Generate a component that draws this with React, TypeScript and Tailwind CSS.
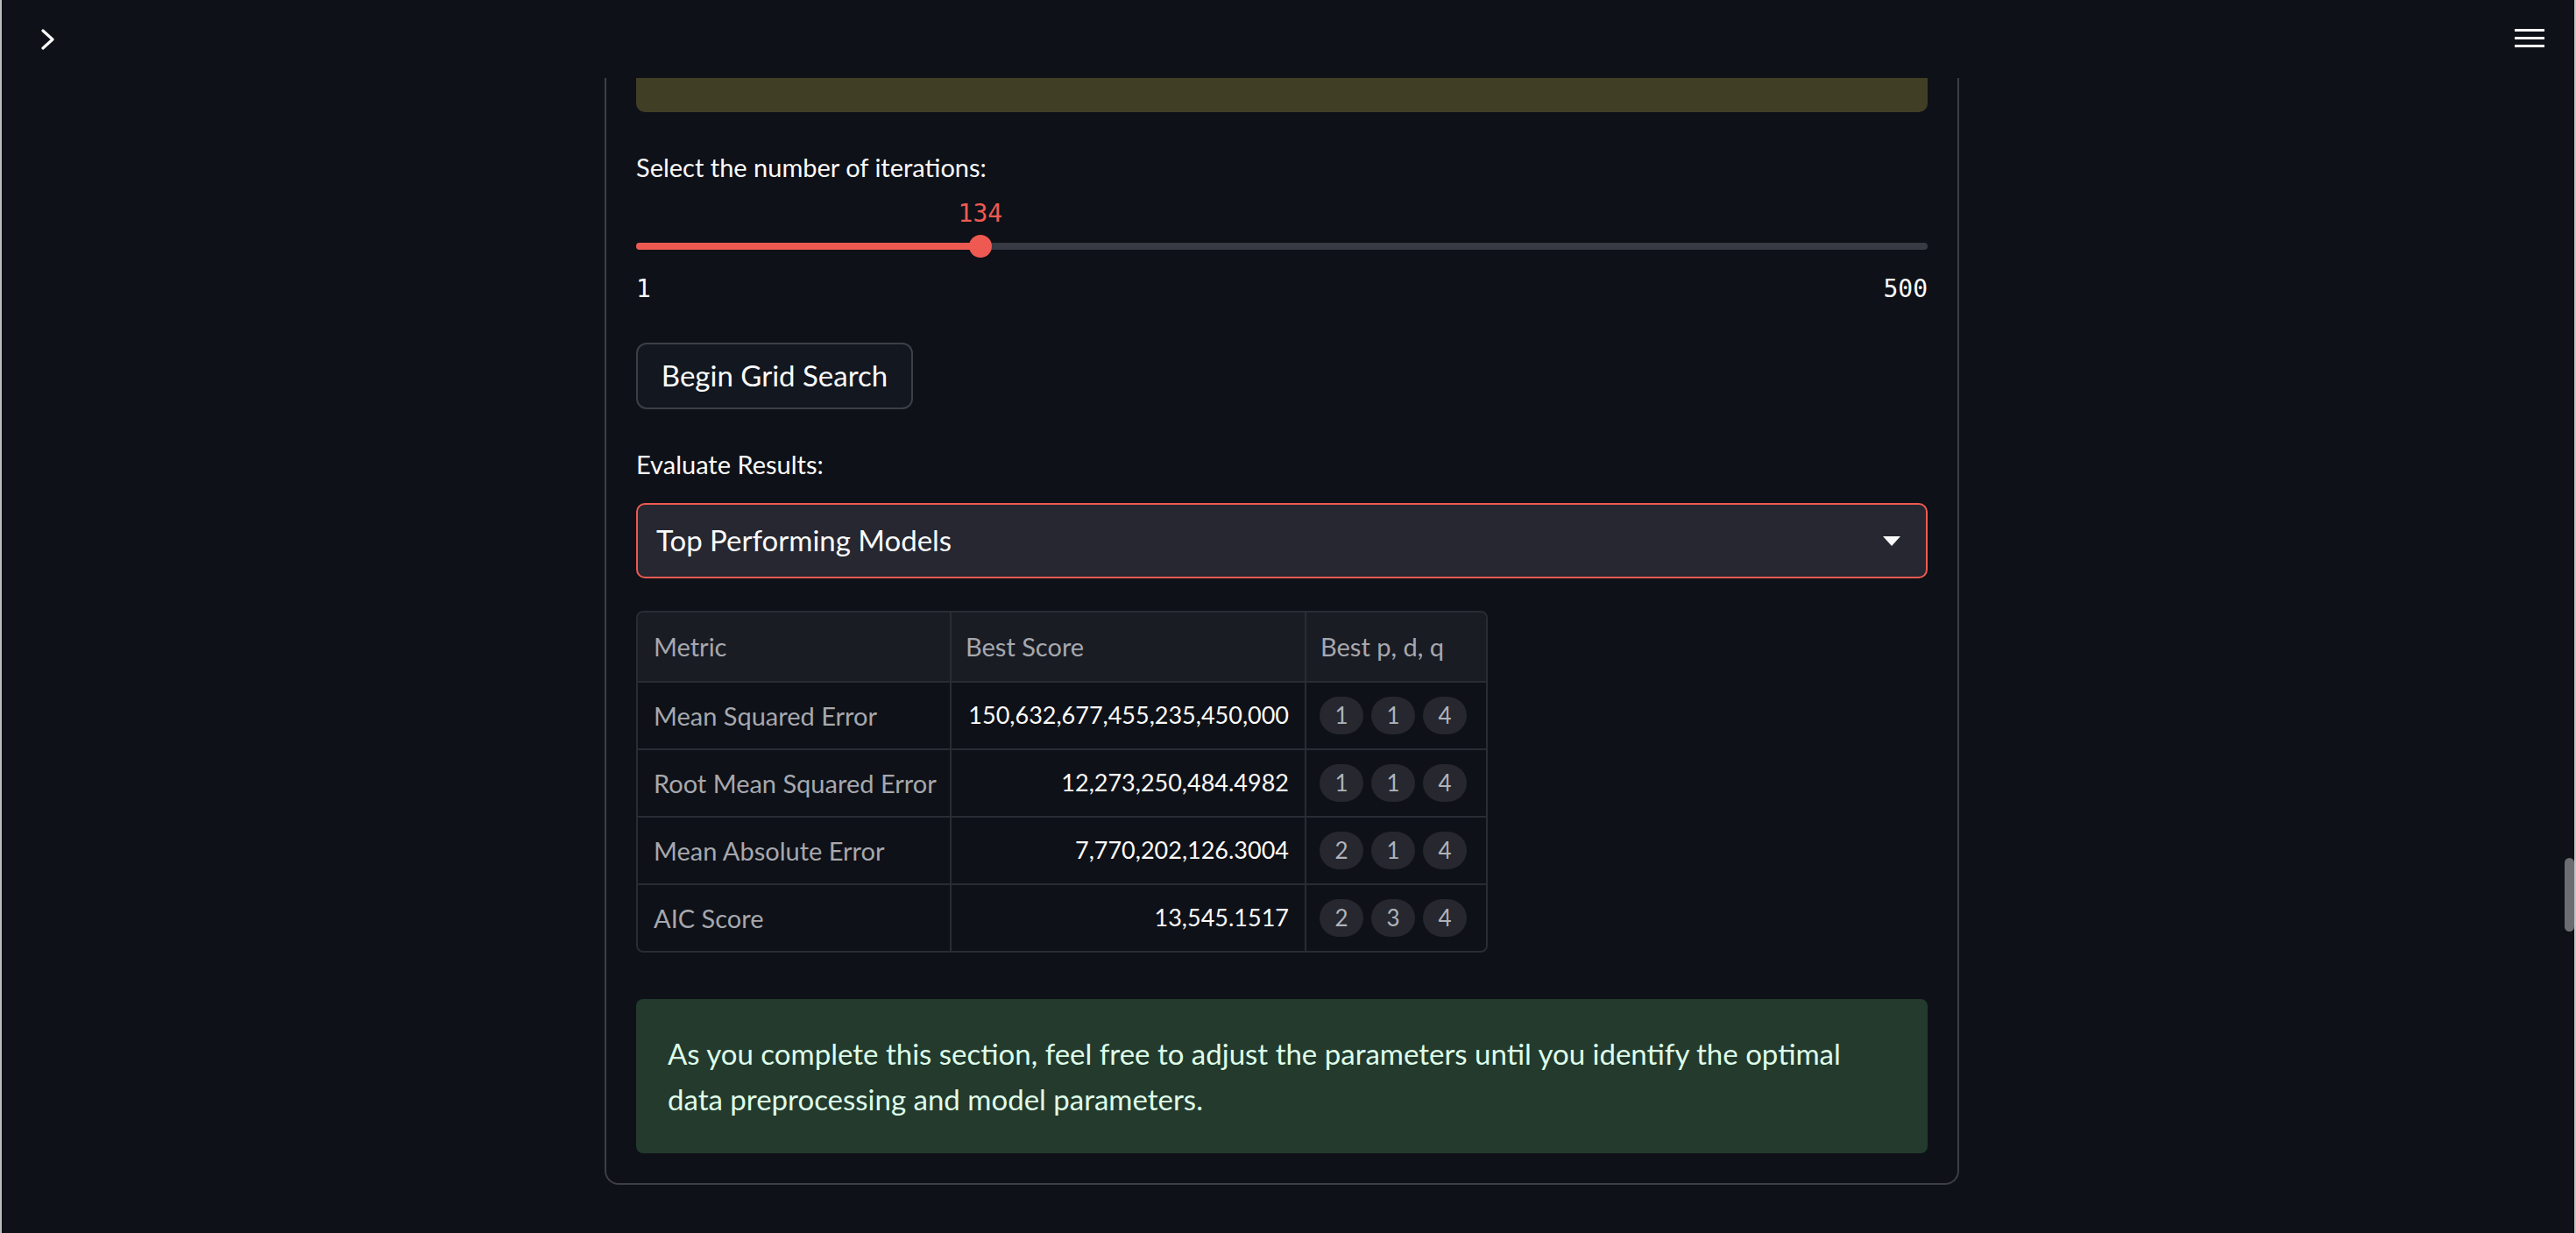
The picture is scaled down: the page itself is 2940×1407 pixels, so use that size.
// Grid search results section of a dark dashboard page.
// Slider, button, select and metric table, all static markup.

const ROWS = [
	{ metric: "Mean Squared Error", score: "150,632,677,455,235,450,000", pdq: [1, 1, 4] },
	{ metric: "Root Mean Squared Error", score: "12,273,250,484.4982", pdq: [1, 1, 4] },
	{ metric: "Mean Absolute Error", score: "7,770,202,126.3004", pdq: [2, 1, 4] },
	{ metric: "AIC Score", score: "13,545.1517", pdq: [2, 3, 4] },
];

const MIN = 1;
const MAX = 500;
const VALUE = 134;

function Slider() {
	const pct = ((VALUE - MIN) / (MAX - MIN)) * 100;
	return (
		<>
			<div className="relative h-[94px]">
				<div
					className="absolute top-[21px] h-[24px] leading-[24px] -translate-x-1/2 text-[28px] text-[#ee5a52] font-['DejaVu_Sans_Mono',monospace]"
					style={{ left: `${pct}%` }}
				>
					{VALUE}
				</div>
				<div className="absolute top-[66px] left-0 right-0 h-[8px] rounded-full bg-[#383a44]">
					<div className="h-full rounded-full bg-[#ee5a52]" style={{ width: `${pct}%` }} />
				</div>
				<div
					className="absolute top-[57px] w-[26px] h-[26px] -translate-x-1/2 rounded-full bg-[#ee5a52]"
					style={{ left: `${pct}%` }}
				/>
			</div>
			<div className="mt-[5px] h-[40px] flex items-center justify-between text-[28px] text-[#fafafa] font-['DejaVu_Sans_Mono',monospace]">
				<span>{MIN}</span>
				<span>{MAX}</span>
			</div>
		</>
	);
}

function ResultsTable() {
	return (
		<div className="w-[972px] border-2 border-[#2a2c34] rounded-[8px] overflow-hidden text-[29px]">
			<div className="grid grid-cols-[358px_405px_205px] h-[78px] bg-[#1a1c24] text-[#a6a8ae]">
				<div className="flex items-center pl-[18px] border-r-2 border-[#2a2c34]">Metric</div>
				<div className="flex items-center pl-[16px] border-r-2 border-[#2a2c34]">Best Score</div>
				<div className="flex items-center pl-[16px]">Best p, d, q</div>
			</div>
			{ROWS.map((r) => (
				<div
					key={r.metric}
					className="grid grid-cols-[358px_405px_205px] h-[77px] border-t-2 border-[#2a2c34]"
				>
					<div className="flex items-center pl-[18px] border-r-2 border-[#2a2c34] text-[#a6a8ae] whitespace-nowrap">
						{r.metric}
					</div>
					<div className="flex items-center justify-end pr-[18px] border-r-2 border-[#2a2c34] text-[27px] text-[#fafafa] whitespace-nowrap">
						{r.score}
					</div>
					<div className="flex items-center gap-[9px] pl-[15px]">
						{r.pdq.map((n, i) => (
							<span
								key={i}
								className="w-[50px] h-[43px] rounded-full bg-[#26272f] flex items-center justify-center text-[26px] text-[#b0b3ba]"
							>
								{n}
							</span>
						))}
					</div>
				</div>
			))}
		</div>
	);
}

export default function App() {
	return (
		<div className="min-h-screen w-full flex bg-[#0e1117] border-l-2 border-[#bdbdbd] font-['Lato',sans-serif] text-[#fafafa]">
			<div className="flex-1 flex flex-col">
				<header className="h-[89px] flex items-center justify-between pl-[45px] pr-[20px] shrink-0">
					<svg width="16" height="26" viewBox="0 0 16 26" fill="none">
						<path d="M2 3 L13 13 L2 23" stroke="#fafafa" strokeWidth="3.2" strokeLinecap="round" strokeLinejoin="round" />
					</svg>
					<svg width="34" height="24" viewBox="0 0 34 24">
						<rect x="0" y="0" width="34" height="3" fill="#fafafa" />
						<rect x="0" y="9" width="34" height="3" fill="#fafafa" />
						<rect x="0" y="18" width="34" height="3" fill="#fafafa" />
					</svg>
				</header>

				<main className="w-[1546px] mx-auto">
					<div className="border-x-2 border-b-2 border-[#3d3f45] rounded-b-[16px] px-[34px] pb-[34px]">
						<div className="h-[39px] bg-[#403e25] rounded-b-[10px]" />

						<div className="mt-[43px] h-[40px] flex items-center text-[29px]">
							Select the number of iterations:
						</div>
						<Slider />

						<button className="mt-[41px] h-[76px] w-[316px] rounded-[12px] border-2 border-[#3d3f45] bg-[#131720] text-[33px] text-[#fafafa] flex items-center justify-center">
							Begin Grid Search
						</button>

						<div className="mt-[43px] h-[40px] flex items-center text-[29px]">
							Evaluate Results:
						</div>
						<div className="mt-[24px] h-[86px] rounded-[10px] border-2 border-[#ee5a52] bg-[#262730] flex items-center justify-between pl-[21px] pr-[29px]">
							<span className="text-[33px]">Top Performing Models</span>
							<svg width="20" height="11" viewBox="0 0 20 11">
								<polygon points="0,0 20,0 10,11" fill="#fafafa" />
							</svg>
						</div>

						<div className="mt-[37px]">
							<ResultsTable />
						</div>

						<div className="mt-[53px] h-[176px] rounded-[8px] bg-[#233a2d] px-[36px] py-[36px] text-[33px] leading-[52px] text-[#dffde9]">
							As you complete this section, feel free to adjust the parameters until you identify the optimal
							<br />
							data preprocessing and model parameters.
						</div>
					</div>
				</main>
			</div>

			{/* scrollbar */}
			<div className="relative w-[16px] shrink-0 border-r-2 border-[#c6c6c6]">
				<div className="absolute top-[979px] right-0 w-[11px] h-[84px] rounded-full bg-[#6c6d72]" />
			</div>
		</div>
	);
}
